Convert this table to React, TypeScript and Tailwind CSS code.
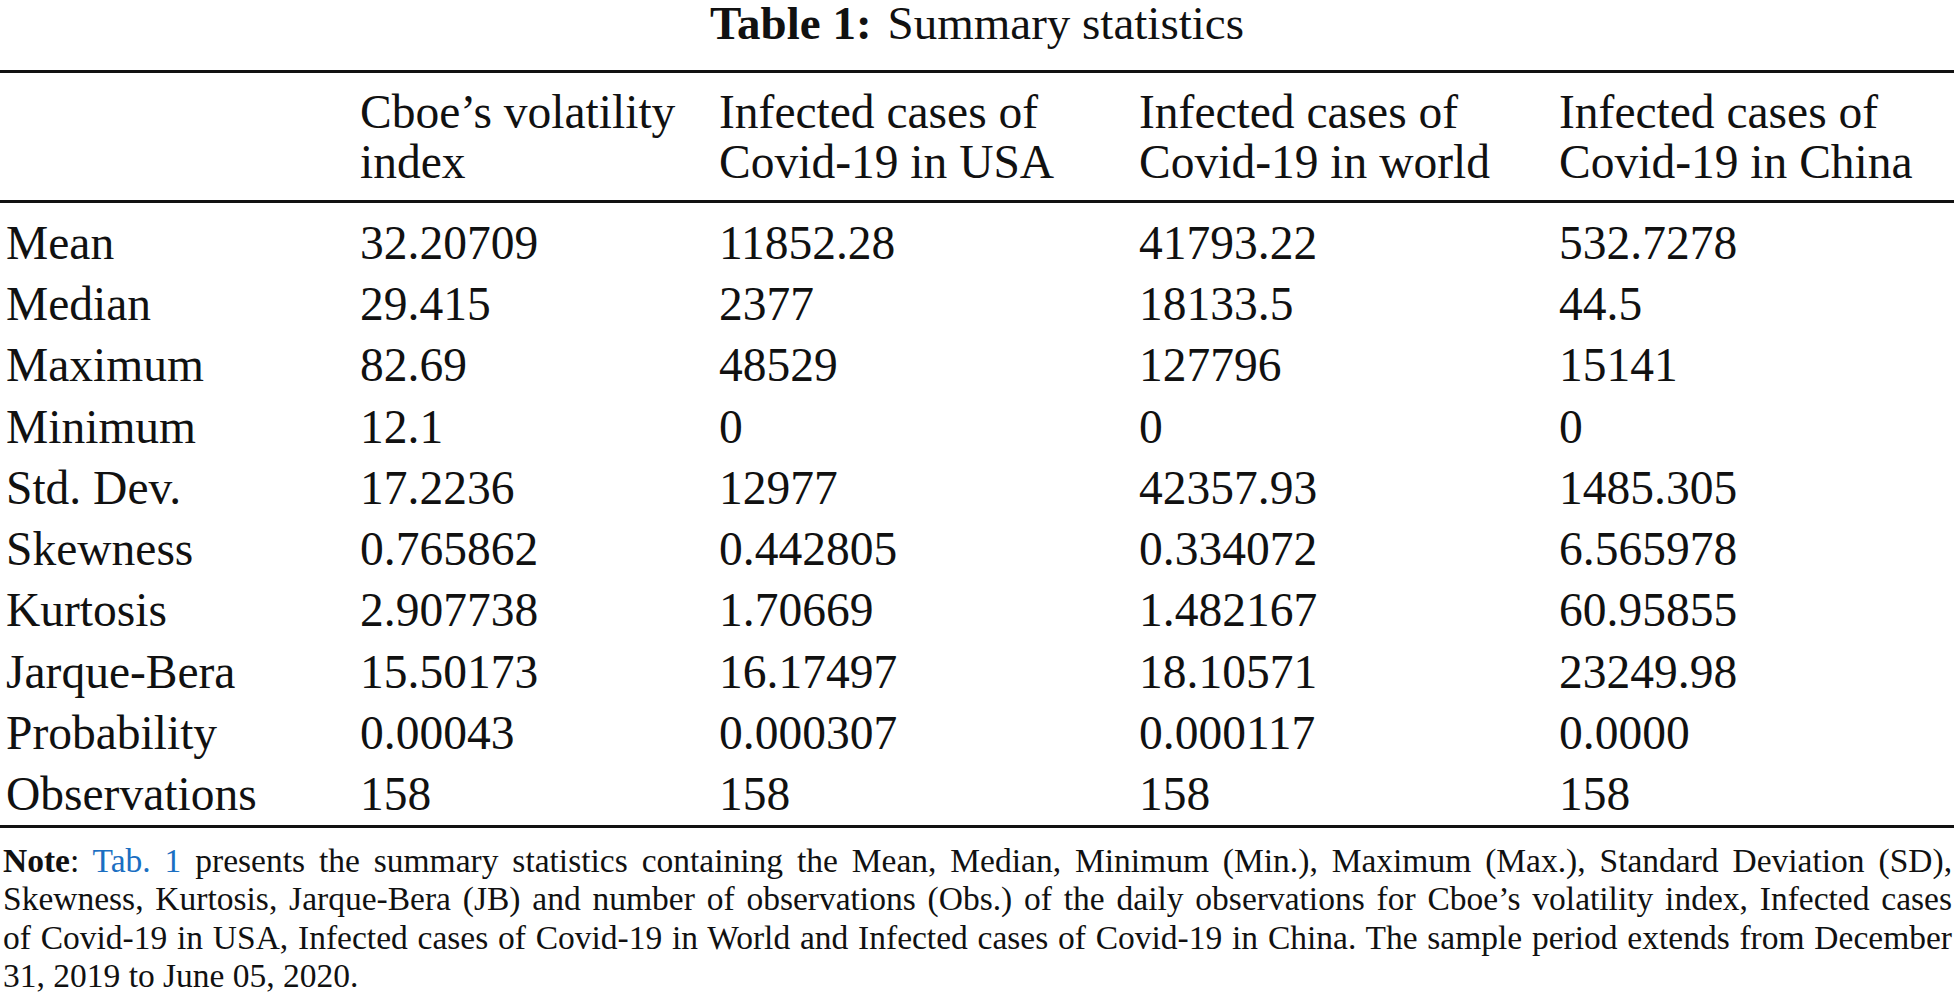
const headers: [string, string][] = [
  ["Cboe’s volatility", "index"],
  ["Infected cases of", "Covid-19 in USA"],
  ["Infected cases of", "Covid-19 in world"],
  ["Infected cases of", "Covid-19 in China"],
];

const rows: string[][] = [
  ["Mean", "32.20709", "11852.28", "41793.22", "532.7278"],
  ["Median", "29.415", "2377", "18133.5", "44.5"],
  ["Maximum", "82.69", "48529", "127796", "15141"],
  ["Minimum", "12.1", "0", "0", "0"],
  ["Std. Dev.", "17.2236", "12977", "42357.93", "1485.305"],
  ["Skewness", "0.765862", "0.442805", "0.334072", "6.565978"],
  ["Kurtosis", "2.907738", "1.70669", "1.482167", "60.95855"],
  ["Jarque-Bera", "15.50173", "16.17497", "18.10571", "23249.98"],
  ["Probability", "0.00043", "0.000307", "0.000117", "0.0000"],
  ["Observations", "158", "158", "158", "158"],
];

const grid = "grid grid-cols-[354px_359px_420px_420px_1fr] pl-[6px]";

// justified note lines, broken as in the source
const justified = "block whitespace-nowrap text-justify [text-align-last:justify]";

export default function App() {
  return (
    <div className="min-h-screen w-full bg-white text-[#111] font-['Liberation_Serif','Times_New_Roman',serif]">
      {/* Caption */}
      <div className="h-[70px] text-center text-[47px] leading-[46px]">
        <span className="font-bold">Table 1:</span>
        <span className="ml-[16px]">Summary statistics</span>
      </div>

      {/* Table */}
      <div className="border-t-[3px] border-[#111]">
        <div className={`${grid} pt-[14px] pb-[13px] text-[47.5px] leading-[50px]`}>
          <div />
          {headers.map((h, i) => (
            <div key={i} className="whitespace-nowrap">
              {h[0]}
              <br />
              {h[1]}
            </div>
          ))}
        </div>
        <div className="border-t-[3px] border-[#111] pt-[9px]">
          {rows.map((r) => (
            <div key={r[0]} className={`${grid} h-[61.3px] items-center text-[47.5px] leading-[50px]`}>
              {r.map((c, j) => (
                <div key={j} className="whitespace-nowrap">
                  {c}
                </div>
              ))}
            </div>
          ))}
        </div>
        <div className="border-t-[3px] border-[#111]" />
      </div>

      {/* Note */}
      <div className="pl-[3px] pr-[2px] pt-[14px] text-[33.5px] leading-[38.3px]">
        <span className={justified}>
          <span className="font-bold">Note</span>: <span className="text-[#1b6fc2]">Tab. 1</span> presents the
          summary statistics containing the Mean, Median, Minimum (Min.), Maximum (Max.), Standard Deviation (SD),
        </span>
        <span className={justified}>
          Skewness, Kurtosis, Jarque-Bera (JB) and number of observations (Obs.) of the daily observations for
          Cboe’s volatility index, Infected cases
        </span>
        <span className={justified}>
          of Covid-19 in USA, Infected cases of Covid-19 in World and Infected cases of Covid-19 in China. The
          sample period extends from December
        </span>
        <span className="block">31, 2019 to June 05, 2020.</span>
      </div>
    </div>
  );
}
